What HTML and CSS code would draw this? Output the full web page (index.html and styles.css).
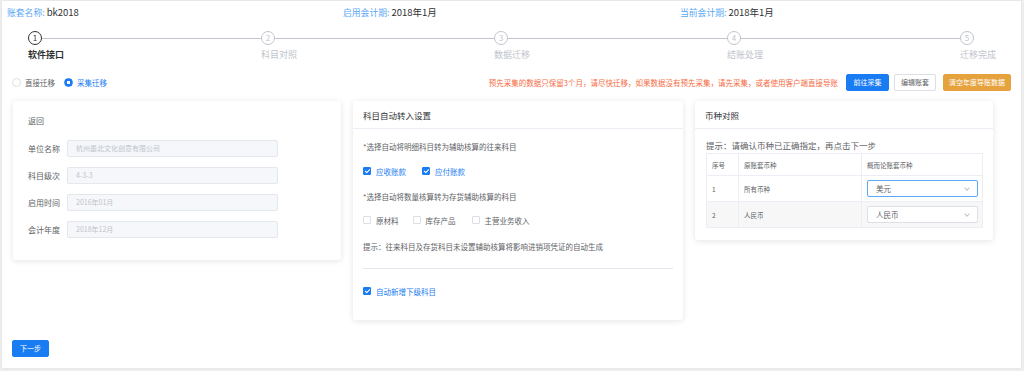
FILE: index.html
```html
<!DOCTYPE html>
<html lang="zh">
<head>
<meta charset="utf-8">
<title>迁移</title>
<link rel="stylesheet" href="styles.css">
</head>
<body>
<div class="panel">
  <div class="info">
    <div><span class="info-label">账套名称:</span> <span class="info-value">bk2018</span></div>
    <div><span class="info-label">启用会计期:</span> <span class="info-value">2018年1月</span></div>
    <div><span class="info-label">当前会计期:</span> <span class="info-value">2018年1月</span></div>
  </div>

  <div class="steps">
    <div class="step active">
      <div class="step-head"><span class="step-icon">1</span><span class="step-line"></span></div>
      <div class="step-title">软件接口</div>
    </div>
    <div class="step">
      <div class="step-head"><span class="step-icon">2</span><span class="step-line"></span></div>
      <div class="step-title">科目对照</div>
    </div>
    <div class="step">
      <div class="step-head"><span class="step-icon">3</span><span class="step-line"></span></div>
      <div class="step-title">数据迁移</div>
    </div>
    <div class="step">
      <div class="step-head"><span class="step-icon">4</span><span class="step-line"></span></div>
      <div class="step-title">结账处理</div>
    </div>
    <div class="step last">
      <div class="step-head"><span class="step-icon">5</span></div>
      <div class="step-title">迁移完成</div>
    </div>
  </div>

  <div class="toolbar">
    <div class="radios">
      <label class="radio"><span class="radio-dot"></span>直接迁移</label>
      <label class="radio checked"><span class="radio-dot"></span>采集迁移</label>
    </div>
    <div class="actions">
      <span class="warn">预先采集的数据只保留3个月，请尽快迁移，如果数据没有预先采集，请先采集，或者使用客户端直接导账</span>
      <button class="btn btn-primary">前往采集</button>
      <button class="btn btn-default">编辑账套</button>
      <button class="btn btn-warning">清空年度导账数据</button>
    </div>
  </div>

  <div class="cards">
    <div class="card card-info">
      <div class="back">返回</div>
      <div class="form-row"><span class="form-label">单位名称</span><span class="input">杭州墨北文化创意有限公司</span></div>
      <div class="form-row"><span class="form-label">科目级次</span><span class="input">4-3-3</span></div>
      <div class="form-row"><span class="form-label">启用时间</span><span class="input">2016年01月</span></div>
      <div class="form-row"><span class="form-label">会计年度</span><span class="input">2018年12月</span></div>
    </div>

    <div class="card card-auto">
      <div class="card-header">科目自动转入设置</div>
      <div class="card-body auto-body">
        <div class="line t1">*选择自动将明细科目转为辅助核算的往来科目</div>
        <div class="checks c1">
          <label class="check on"><span class="box"></span>应收账款</label>
          <label class="check on"><span class="box"></span>应付账款</label>
        </div>
        <div class="line t2">*选择自动将数量核算转为存货辅助核算的科目</div>
        <div class="checks c2">
          <label class="check"><span class="box"></span>原材料</label>
          <label class="check"><span class="box"></span>库存产品</label>
          <label class="check"><span class="box"></span>主营业务收入</label>
        </div>
        <div class="line t3">提示：往来科目及存货科目未设置辅助核算将影响进销项凭证的自动生成</div>
        <div class="divider"></div>
        <div class="checks c3">
          <label class="check on"><span class="box"></span>自动新增下级科目</label>
        </div>
      </div>
    </div>

    <div class="card card-cur">
      <div class="card-header">币种对照</div>
      <div class="cur-body">
        <div class="cur-hint">提示：请确认币种已正确指定，再点击下一步</div>
        <table class="cur-table">
          <thead>
            <tr><th class="col1">序号</th><th class="col2">原账套币种</th><th class="col3">概而论账套币种</th></tr>
          </thead>
          <tbody>
            <tr><td>1</td><td>所有币种</td><td><span class="select focus">美元<span class="chev"></span></span></td></tr>
            <tr class="stripe"><td>2</td><td>人民币</td><td><span class="select">人民币<span class="chev"></span></span></td></tr>
          </tbody>
        </table>
      </div>
    </div>
  </div>

  <div class="footer">
    <button class="btn btn-primary btn-next">下一步</button>
  </div>
</div>
</body>
</html>
```

FILE: styles.css
```css
* { box-sizing: border-box; }
html, body { margin: 0; padding: 0; }
body {
  background: #efefef;
  font-family: "Noto Sans CJK SC", "Noto Sans", sans-serif;
  color: #606266;
  width: 1024px;
  height: 371px;
  overflow: hidden;
}
.panel {
  margin: 1px 3px 0 2px;
  height: 367px;
  background: #fff;
  box-shadow: 0 0 3px rgba(0,0,0,0.08);
}

/* info bar */
.info {
  display: grid;
  grid-template-columns: 336px 337px 1fr;
  padding-left: 5px;
  height: 22px;
  align-items: center;
  font-size: 8.8px;
}
.info-label { color: #5aa8f6; }
.info-value { color: #303133; font-size: 9.5px; }

/* steps */
.steps {
  display: flex;
  padding-left: 26px;
  margin-top: 8px;
}
.step { width: 233px; }
.step.last { width: 50px; }
.step-head {
  display: flex;
  align-items: center;
  height: 14px;
}
.step-icon {
  width: 14px;
  height: 14px;
  border: 1.5px solid #c0c4cc;
  border-radius: 50%;
  color: #c0c4cc;
  font-size: 8px;
  line-height: 11px;
  text-align: center;
  flex: none;
}
.step-line {
  flex: 1;
  height: 1px;
  background: #c0c4cc;
}
.step-title {
  margin-top: 2px;
  line-height: 16px;
  font-size: 9px;
  color: #c0c4cc;
  white-space: nowrap;
}
.step.active .step-icon { border-color: #303133; color: #303133; }
.step.active .step-title { color: #303133; font-weight: 700; }

/* toolbar */
.toolbar {
  display: flex;
  justify-content: space-between;
  align-items: center;
  height: 20px;
  margin-top: 9px;
  padding: 0 10px;
}
.radios { display: flex; gap: 9px; }
.radio {
  display: flex;
  align-items: center;
  font-size: 7.5px;
  color: #606266;
}
.radio-dot {
  width: 9px;
  height: 9px;
  border: 1px solid #dcdfe6;
  border-radius: 50%;
  margin-right: 4px;
  background: #fff;
}
.radio.checked { color: #1a7cf2; }
.radio.checked .radio-dot {
  border-color: #1a7cf2;
  background: radial-gradient(circle, #fff 0 1.6px, #1a7cf2 2px);
}
.actions { display: flex; align-items: center; }
.warn {
  font-size: 7.5px;
  color: #f56c45;
  margin-right: 8px;
}
.btn {
  font-family: inherit;
  font-size: 7px;
  height: 17px;
  padding: 0;
  border-radius: 2px;
  border: 1px solid transparent;
  cursor: pointer;
}
.btn-primary { background: #1a7cf2; border-color: #1a7cf2; color: #fff; width: 43px; }
.btn-default { background: #fff; border-color: #dcdfe6; color: #606266; width: 42px; margin-left: 5px; }
.btn-warning { background: #e6a23c; border-color: #e6a23c; color: #fff; width: 68px; margin-left: 7px; }

/* cards */
.cards {
  display: flex;
  align-items: flex-start;
  gap: 12px;
  margin-top: 9px;
  padding-left: 11px;
}
.card {
  background: #fff;
  border-radius: 3px;
  box-shadow: 0 1px 6px rgba(0,0,0,0.11);
}
.card-header {
  height: 28px;
  line-height: 28px;
  padding-left: 10px;
  font-size: 8.5px;
  color: #303133;
  border-bottom: 1px solid #ebeef5;
}

.card-info {
  width: 328px;
  height: 159px;
  padding: 12px 15px 0;
  font-size: 8px;
}
.back { line-height: 16px; color: #606266; margin-bottom: 11px; }
.form-row {
  display: flex;
  align-items: center;
  height: 17px;
  margin-bottom: 10px;
}
.form-label { width: 39px; color: #606266; }
.input {
  width: 211px;
  height: 17px;
  line-height: 15px;
  padding-left: 8px;
  background: #f5f7fa;
  border: 1px solid #e4e7ed;
  border-radius: 2px;
  color: #c0c4cc;
  font-size: 7px;
}

.card-auto { width: 330px; height: 219px; }
.auto-body { padding: 11px 10px 0; font-size: 7.5px; }
.line { line-height: 14px; color: #606266; }
.checks { display: flex; height: 14px; align-items: center; }
.check {
  display: flex;
  align-items: center;
  color: #606266;
}
.check .box {
  width: 8px;
  height: 8px;
  border: 1px solid #dcdfe6;
  border-radius: 1px;
  margin-right: 5px;
  background: #fff;
  position: relative;
}
.check.on { color: #1a7cf2; }
.check.on .box { background: #1a7cf2; border-color: #1a7cf2; }
.check.on .box::after {
  content: "";
  position: absolute;
  left: 2px;
  top: 0px;
  width: 2px;
  height: 4px;
  border: solid #fff;
  border-width: 0 1px 1px 0;
  transform: rotate(45deg);
}
.c1 { margin-top: 10px; }
.c1 .check + .check { margin-left: 16px; }
.t2 { margin-top: 12px; }
.c2 { margin-top: 9px; }
.c2 .check:nth-child(2) { margin-left: 14px; }
.c2 .check:nth-child(3) { margin-left: 16px; }
.t3 { margin-top: 13px; }
.divider { height: 1px; background: #e4e7ed; margin-top: 14px; }
.c3 { margin-top: 15px; }

.card-cur { width: 298px; height: 139px; }
.cur-body { padding: 9px 10px 0 11px; }
.cur-hint { font-size: 8.5px; line-height: 14px; color: #606266; margin-bottom: 1px; }
.cur-table {
  width: 277px;
  border-collapse: collapse;
  table-layout: fixed;
  font-size: 6.5px;
  color: #606266;
}
.cur-table th, .cur-table td {
  border: 1px solid #ebeef5;
  text-align: left;
  padding: 0 0 0 5px;
  font-weight: 400;
}
.cur-table th { height: 22px; color: #606266; }
.cur-table td { height: 26px; }
.col1 { width: 32px; }
.col2 { width: 123px; }
.stripe td { background: #f7f7f7; }
.select {
  display: flex;
  align-items: center;
  justify-content: space-between;
  width: 111px;
  height: 17px;
  padding: 0 8px;
  border: 1px solid #dcdfe6;
  border-radius: 2px;
  background: #fff;
  font-size: 7.5px;
  color: #606266;
}
.select.focus { border-color: #5aa8f6; }
.chev {
  width: 4px;
  height: 4px;
  border: solid #c0c4cc;
  border-width: 0 1px 1px 0;
  transform: rotate(45deg);
  margin-top: -2px;
}

.footer { padding-left: 10px; margin-top: 12px; }
.btn-next { width: 37px; }
```
